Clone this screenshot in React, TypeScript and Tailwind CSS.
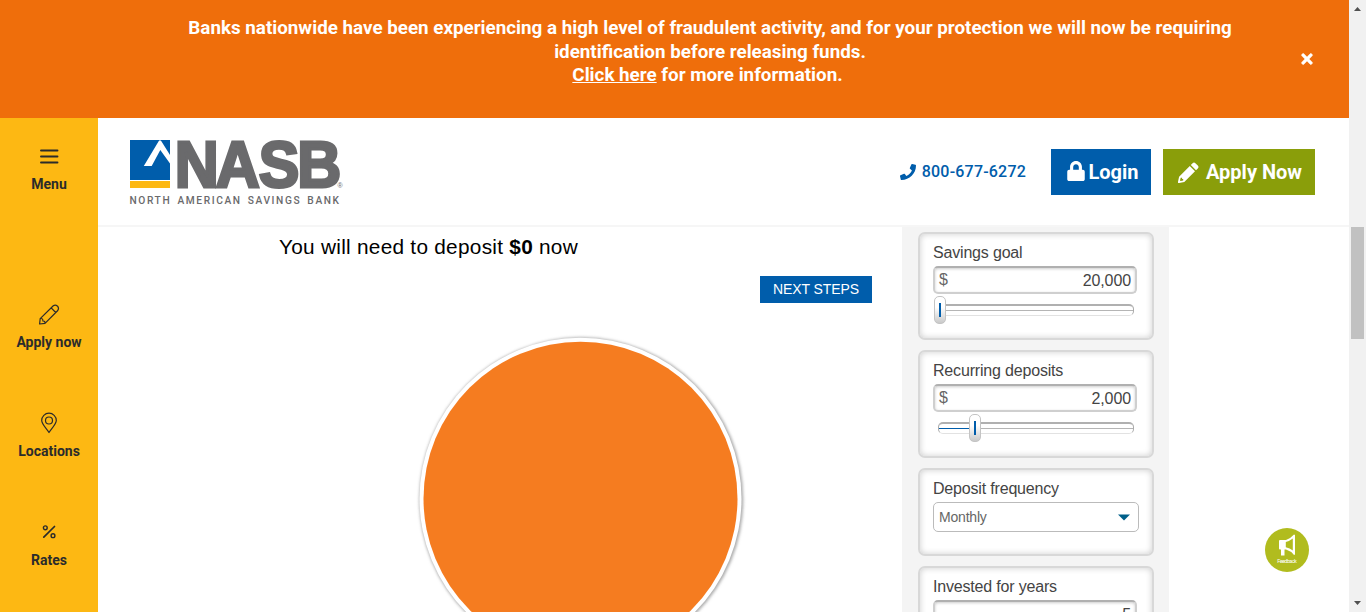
import type { ReactNode } from "react";
import { FaLock, FaPhone, FaTimes } from "react-icons/fa";

function Logo() {
  return (
    <svg width="216" height="70" viewBox="0 0 216 70" className="block" aria-label="NASB">
      <rect x="1" y="1" width="40" height="40" fill="#005dab" />
      <rect x="1" y="42" width="40" height="7" fill="#fdb813" />
      <path d="M14.800 27 L29.800 2 Q31 .6 32.200 2 L41 16 V24.500 L31.300 11 L22.700 27 Z" fill="#fff" />
      <text
        x="49.300 93.400 139.400 180.800"
        y="48"
        transform="scale(.93 1)"
        fill="#6a6a6c"
        stroke="#6a6a6c"
        strokeWidth="3"
        fontFamily="Liberation Sans, sans-serif"
        fontWeight="700"
        fontSize="65.500"
      >
        NASB
      </text>
      <text x="208.500" y="49" fill="#6a6a6c" fontFamily="Liberation Sans, sans-serif" fontSize="7">®</text>
      <text x="0.500" y="65" fill="#6a6a6c" fontFamily="Roboto, sans-serif" fontWeight="500" fontSize="10.200" wordSpacing="2" textLength="209.500" lengthAdjust="spacing">
        NORTH AMERICAN SAVINGS BANK
      </text>
    </svg>
  );
}

function PencilIcon() {
  return (
    <svg width="21" height="21" viewBox="0 0 21 21" fill="#fff">
      <path d="M14.600 1.200 Q16 -.2 17.400 1.200 L19.800 3.600 Q21.200 5 19.800 6.400 L18 8.200 L12.800 3 Z" />
      <path fillRule="evenodd" d="M11.800 4 L17 9.200 L6.300 19.900 L1.200 21 Q-.2 21.200 0 19.800 L1.100 14.700 Z M2.700 15.700 L2 18.400 L2.700 19.100 L5.200 18.400 V16.900 H4.100 V15.700 Z" />
    </svg>
  );
}

function NavItem({ label, children, className }: { label: string; children: ReactNode; className: string }) {
  return (
    <a className={`flex flex-col items-center ${className}`}>
      <svg width="24" height="24" viewBox="0 0 24 24" fill="none" stroke="#2b2b2b" strokeWidth="1.2" strokeLinecap="round" strokeLinejoin="round">
        {children}
      </svg>
      <span className="mt-[6px] text-[14px] leading-5 font-bold text-[#2b2b2b]">{label}</span>
    </a>
  );
}

function Card({ label, height, children }: { label: string; height: string; children: ReactNode }) {
  return (
    <section className={`w-[236px] shrink-0 rounded-[7px] border-2 border-[#d8d8d8] bg-white px-[13px] pt-[9px] shadow-[inset_0_0_6px_rgba(0,0,0,0.2)] ${height}`}>
      <div className="text-[16px] leading-[20px] tracking-[-0.18px] text-[#444]">{label}</div>
      {children}
    </section>
  );
}

function Amount({ value, unit }: { value: string; unit?: string }) {
  return (
    <div className="mt-[3px] flex h-[28px] w-[204px] items-center justify-between rounded-[5px] border-2 border-t-[#b0b0b0] border-x-[#cfcfcf] border-b-[#cfcfcf] bg-white pt-[2px] pr-[4px] pl-[4px] text-[16px] tracking-[-0.1px] text-[#444] shadow-[inset_0_1px_3px_rgba(0,0,0,0.2)]">
      <span className="pb-[2px] text-[#666]">{unit}</span>
      <span>{value}</span>
    </div>
  );
}

function Slider({ percent }: { percent: number }) {
  return (
    <div className="mt-[2px] ml-[5px] flex h-[28px] w-[196px] items-center">
      <div className="relative flex h-[12px] w-full items-center rounded-[5px] border border-t-2 border-t-[#b0b0b0] border-r-[#aaa] border-b-[#e2e2e2] border-l-[#aaa]">
        <div className="h-px w-full bg-[#b5b5b5]" />
        <div className="absolute left-0 h-px bg-[#005dab]" style={{ width: `${percent}%` }} />
        <div
          className="absolute -top-[10px] flex h-[28px] w-[12px] -translate-x-1/2 items-center justify-center rounded-[5px] border border-[#c4c4c4] bg-linear-to-b from-white from-40% to-[#c9c9c9]"
          style={{ left: `${percent}%` }}
        >
          <div className="h-[14px] w-[2px] bg-[#005dab]" />
        </div>
      </div>
    </div>
  );
}

export default function App() {
  return (
    <div className="flex h-[612px] w-[1366px] overflow-hidden bg-white font-['Roboto',sans-serif]">
      <div className="flex w-[1349px] flex-col">
        <div className="flex h-[118px] shrink-0 bg-[#ef6e0b] text-white">
          <p className="ml-[154px] flex-1 pt-[17px] text-center text-[18.81px] leading-[23.5px] font-bold">
            Banks nationwide have been experiencing a high level of fraudulent activity, and for your protection we will now be requiring
            <br />
            identification before releasing funds.
            <br />
            <span className="pr-[5px]">
              <a className="underline">Click here</a> for more information.
            </span>
          </p>
          <button className="flex w-[83px] items-center justify-center pr-px">
            <FaTimes className="size-[16px] stroke-white stroke-[16]" />
          </button>
        </div>

        <div className="flex min-h-0 flex-1">
          <nav className="flex w-[98px] shrink-0 flex-col bg-[#fdb813]">
            <NavItem label="Menu" className="pt-[26px]">
              <path d="M4 6.500h16.500M4 12.500h16.500M4 18.500h16.500" strokeWidth="1.900" />
            </NavItem>
            <NavItem label="Apply now" className="pt-[108px]">
              <path d="M2.600 22 L3.200 16.600 L16.300 3.800 Q18.300 2.200 20.600 4.200 Q22.300 6.500 20.800 8.500 L8 21.300 Z M14.200 5.900 L18.700 10.500 M3.200 16.600 Q6 16 5.900 19 Q8.200 18.800 8 21.300" strokeWidth="1.200" />
            </NavItem>
            <NavItem label="Locations" className="pt-[59px]">
              <path d="M12 21.500 C10 18 4.700 13.200 4.700 9.500 A7.300 7.300 0 0 1 19.300 9.500 C19.300 13.200 14 18 12 21.500 Z" />
              <circle cx="12" cy="9.500" r="3.500" />
            </NavItem>
            <NavItem label="Rates" className="pt-[59px]">
              <path d="M6.800 17.200 L17.500 6.500" strokeWidth="1.700" />
              <circle cx="8.300" cy="7.800" r="1.900" strokeWidth="1.400" />
              <circle cx="16" cy="15.700" r="1.900" strokeWidth="1.400" />
            </NavItem>
          </nav>

          <div className="flex flex-1 flex-col">
            <header className="flex h-[109px] shrink-0 items-start border-b-2 border-[#f6f6f6] pl-[31px]">
              <div className="pt-[21px]">
                <Logo />
              </div>
              <a className="mt-[41px] mr-px ml-auto flex items-center gap-[6px] text-[16px] leading-6 font-medium tracking-[0.2px] text-[#005dab]">
                <FaPhone className="size-[16px]" />
                <span className="pt-px">800-677-6272</span>
              </a>
              <a className="mt-[31px] ml-[24px] flex h-[46px] w-[100px] items-center justify-center gap-[3px] bg-[#005dab] pl-[4px] text-[20px] font-bold text-white">
                <FaLock className="h-[20px] w-[18px] -translate-y-px" />
                Login
              </a>
              <a className="mt-[31px] mr-[34px] ml-[12px] flex h-[46px] w-[152px] items-center justify-center gap-[7px] bg-[#8a9e0a] pl-[2px] text-[20px] font-bold text-white">
                <PencilIcon />
                Apply Now
              </a>
            </header>

            <main className="flex min-h-0 flex-1 font-['Liberation_Sans',sans-serif]">
              <div className="flex w-[804px] shrink-0 flex-col">
                <h2 className="mt-[7px] ml-[181px] text-[20.8px] leading-[26px] tracking-[0.27px] text-black">
                  You will need to deposit <b>$0</b> now
                </h2>
                <a className="mt-[16px] mr-[30px] flex h-[27px] w-[112px] shrink-0 items-center justify-center self-end bg-[#005dab] text-[14px] tracking-[-0.1px] text-white">
                  NEXT STEPS
                </a>
                <svg width="340" height="290" viewBox="0 0 340 290" className="mt-[22px] ml-[312px] block shrink-0">
                  <defs>
                    <filter id="pie-shadow" x="-10%" y="-10%" width="120%" height="120%">
                      <feGaussianBlur stdDeviation="1.5" />
                    </filter>
                  </defs>
                  <circle cx="171.300" cy="174.300" r="162" fill="#aaa" filter="url(#pie-shadow)" />
                  <circle cx="170.500" cy="173.700" r="161" fill="#fff" />
                  <circle cx="170.500" cy="173.700" r="157" fill="#f57c20" />
                </svg>
              </div>
              <aside className="flex w-[267px] shrink-0 flex-col gap-[10px] bg-[#f4f4f4] pt-[5px] pl-[16px]">
                <Card label="Savings goal" height="h-[108px]">
                  <Amount unit="$" value="20,000" />
                  <Slider percent={0.5} />
                </Card>
                <Card label="Recurring deposits" height="h-[108px]">
                  <Amount unit="$" value="2,000" />
                  <Slider percent={18.5} />
                </Card>
                <Card label="Deposit frequency" height="h-[88px]">
                  <div className="mt-[3px] flex h-[30px] w-[206px] items-center justify-between rounded-[5px] border border-[#bbb] pr-[8px] pl-[5px] text-[14px] tracking-[-0.2px] text-[#666]">
                    Monthly
                    <svg width="12" height="7" viewBox="0 0 12 7">
                      <path d="M0 0.500h12L6 6.500z" fill="#00608a" />
                    </svg>
                  </div>
                </Card>
                <Card label="Invested for years" height="h-[108px]">
                  <Amount value="5" />
                </Card>
              </aside>
            </main>
          </div>
        </div>
      </div>

      <div className="flex w-[17px] flex-col items-center bg-[#f1f1f1]">
        <svg width="17" height="17" viewBox="0 0 17 17">
          <path d="M5 11h7L8.500 7z" fill="#505050" />
        </svg>
        <div className="mt-[210px] h-[112px] w-[13px] bg-[#c1c1c1]" />
        <svg width="17" height="17" viewBox="0 0 17 17" className="mt-auto">
          <path d="M5 6h7L8.500 10z" fill="#505050" />
        </svg>
      </div>

      <button className="absolute top-[528px] left-[1265px] size-[44px] rounded-full bg-[#b1bc1e]">
        <svg width="44" height="44" viewBox="0 0 44 44">
          <path d="M14 13 Q14 12 15 12 L21 12 Q26 10 29 6.500 L30 7 V26.500 L29 27 Q26 23 21 21.500 H19.500 V27.500 H16 V21.500 H15 Q14 21.500 14 20.500 Z" fill="#fff" />
          <path d="M20.800 14 Q25 12.800 27.800 10.500 V22.500 Q25 20.200 20.800 19.300 Z" fill="#b1bc1e" />
          <path d="M28.500 14.500 Q31 16.500 28.500 19Z" fill="#fff" />
          <text x="22" y="35" fill="#fff" fontFamily="Roboto, sans-serif" fontSize="5.500" textAnchor="middle" textLength="19.500">
            Feedback
          </text>
        </svg>
      </button>
    </div>
  );
}
